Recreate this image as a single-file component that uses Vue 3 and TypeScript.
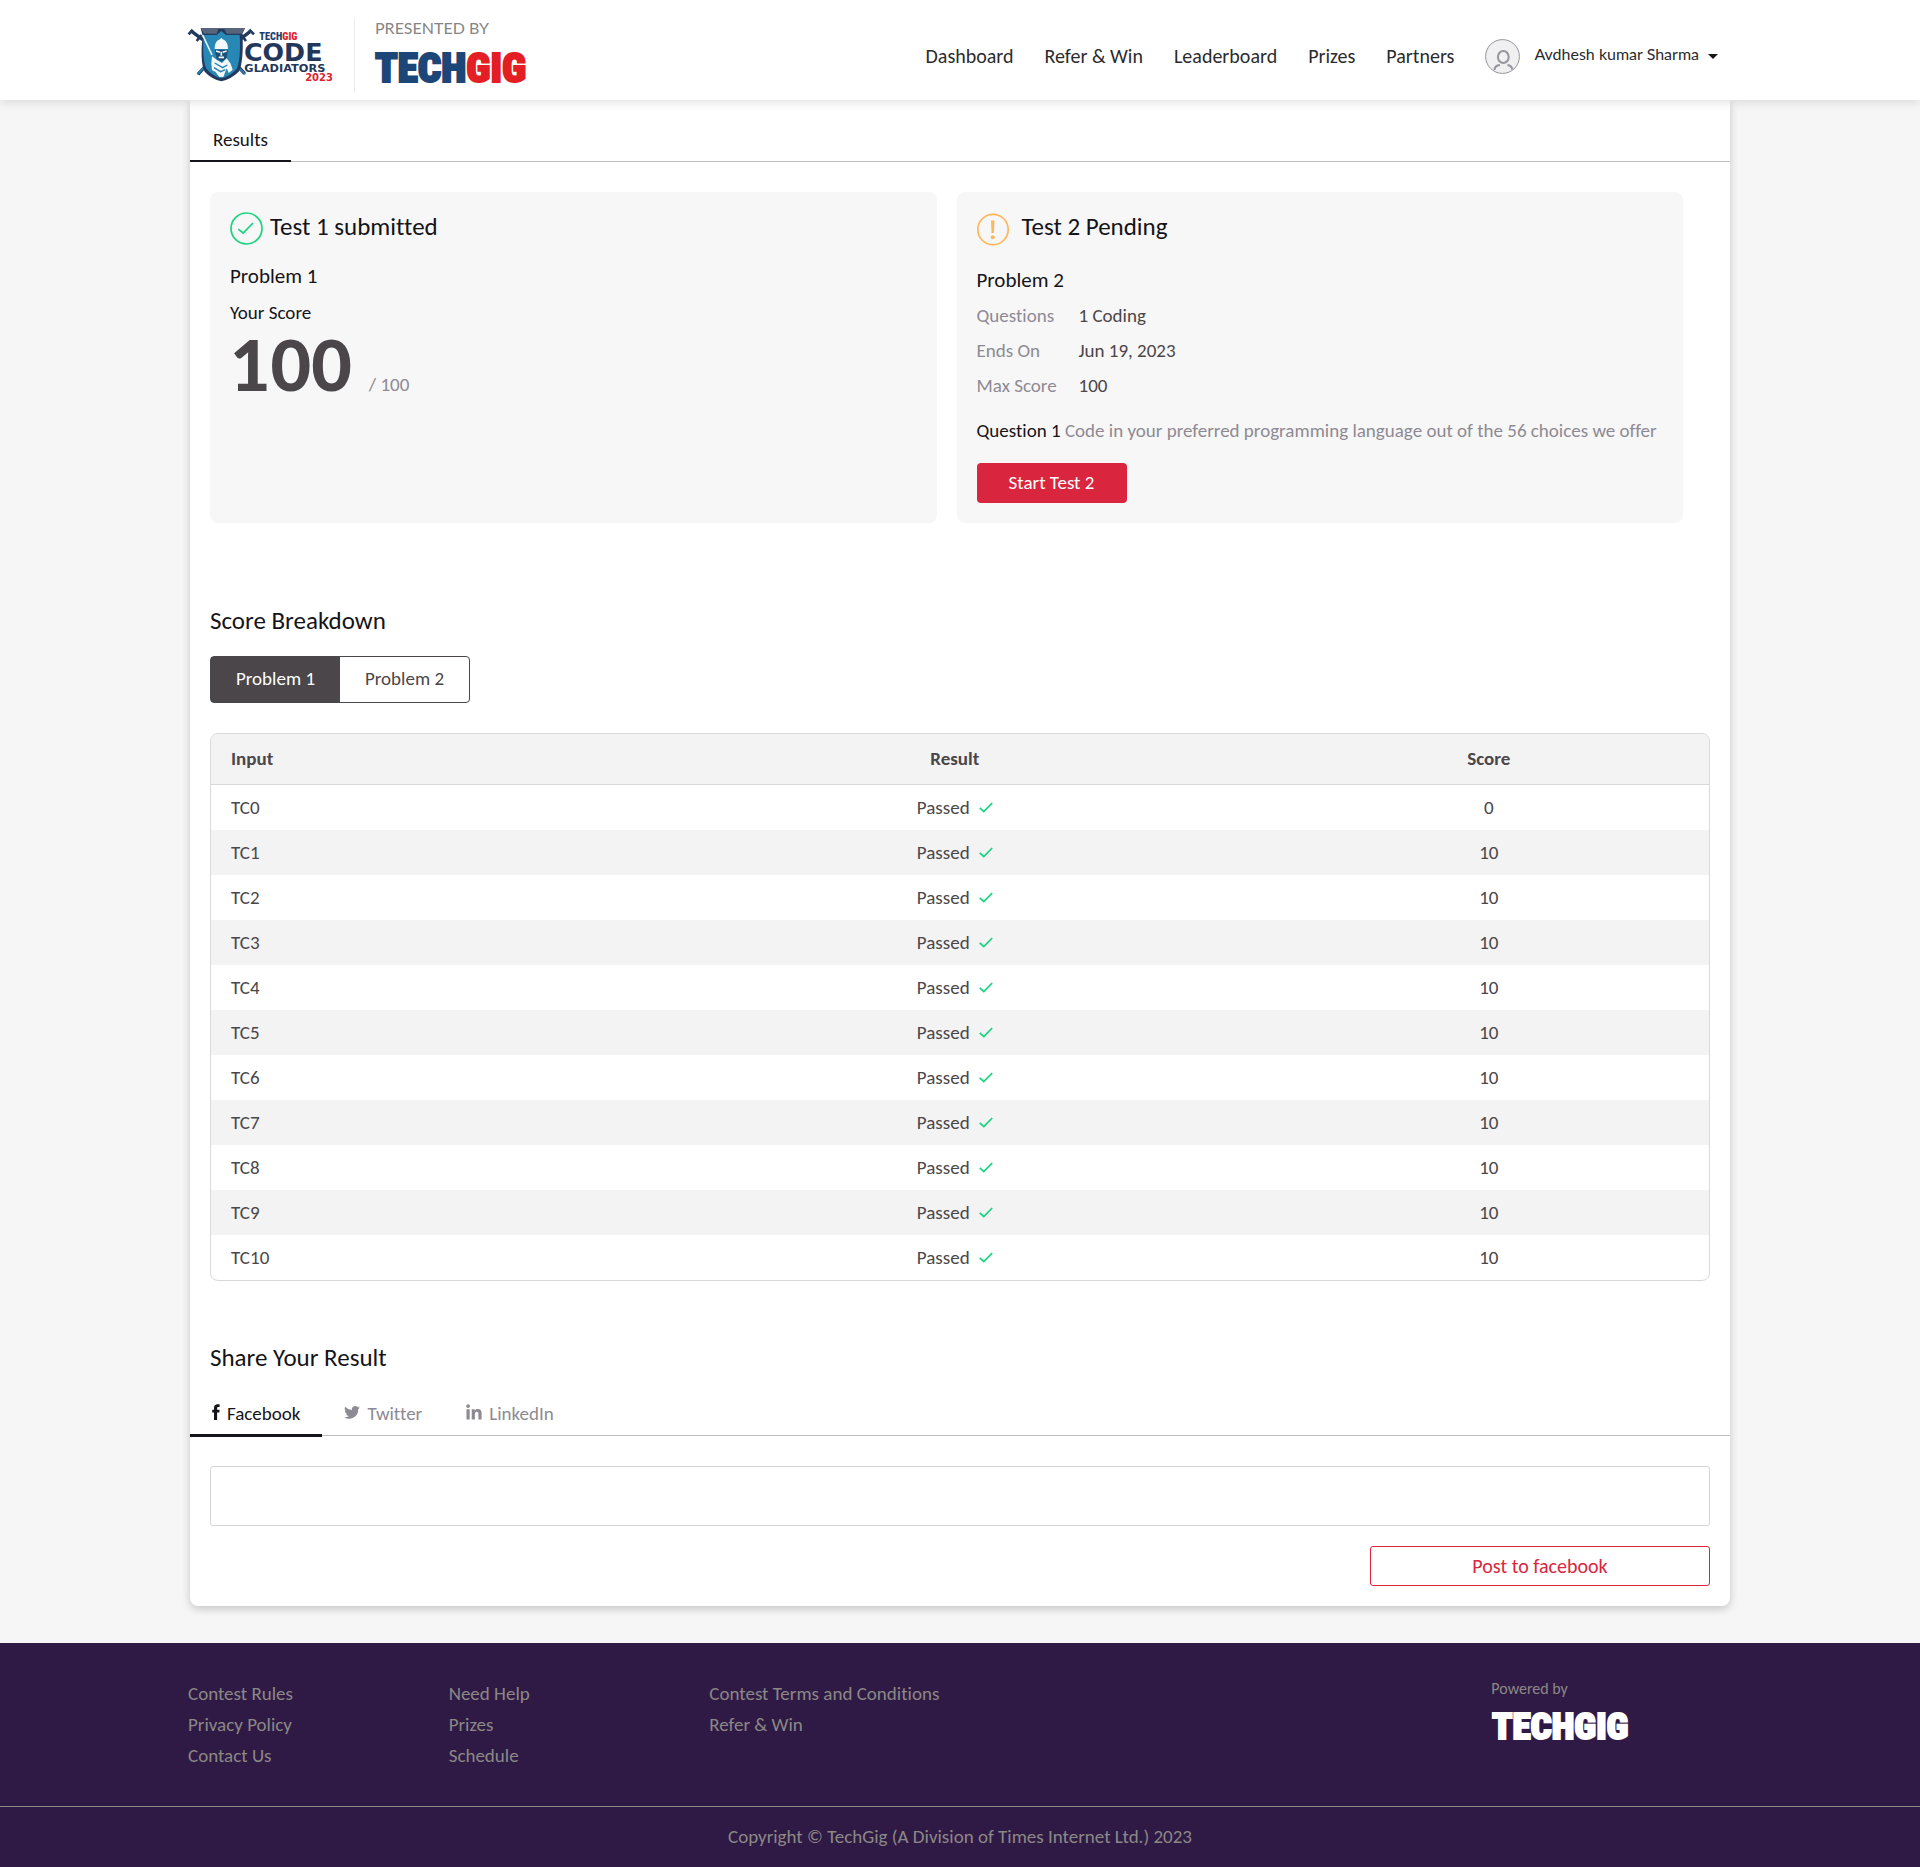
<script setup lang="ts">
import { ref } from 'vue'

interface TestCase {
  input: string
  result: string
  score: number
}

type Network = 'Facebook' | 'Twitter' | 'LinkedIn'

const navLinks: string[] = ['Dashboard', 'Refer & Win', 'Leaderboard', 'Prizes', 'Partners']

const details: { label: string; value: string }[] = [
  { label: 'Questions', value: '1 Coding' },
  { label: 'Ends On', value: 'Jun 19, 2023' },
  { label: 'Max Score', value: '100' },
]

const problems: string[] = ['Problem 1', 'Problem 2']
const activeProblem = ref<string>('Problem 1')

const testCases: TestCase[] = Array.from({ length: 11 }, (_, i) => ({
  input: `TC${i}`,
  result: 'Passed',
  score: i === 0 ? 0 : 10,
}))

const networks: Network[] = ['Facebook', 'Twitter', 'LinkedIn']
const activeNetwork = ref<Network>('Facebook')
const message = ref<string>('')

const footerColumns: string[][] = [
  ['Contest Rules', 'Privacy Policy', 'Contact Us'],
  ['Need Help', 'Prizes', 'Schedule'],
  ['Contest Terms and Conditions', 'Refer & Win'],
]
</script>

<template>
  <header class="header">
    <div class="header-inner">
      <a class="brand" href="#" aria-label="Code Gladiators 2023">
        <svg width="147" height="55" viewBox="54 80 441 165">
          <!-- crossed swords -->
          <g stroke="#223a5e" fill="none">
            <path d="M66 94 L98 118 M240 94 L206 120 M104 200 L84 222 M204 198 L224 220" stroke-width="10" />
            <path d="M56 102 L68 88 M80 122 L94 104 M238 88 L252 102 M214 104 L228 122" stroke-width="8" />
            <path d="M82 222 L106 198 M226 222 L202 198" stroke="#2b7fae" stroke-width="6" />
          </g>
          <!-- shield -->
          <path d="M92 84 H225 L217 100 C221 150 216 200 206 214 Q184 236 154 243 Q124 236 104 214 C94 198 92 150 98 106 Z" fill="#223a5e" />
          <path d="M101 104 L140 104 L154 92 L168 104 L209 104 C212 150 208 192 200 206 Q180 228 154 234 Q128 228 110 206 C100 190 98 150 101 104 Z" fill="#2787b5" />
          <path d="M92 84 H146 L140 100 H102 Z M162 84 H225 L215 100 H170 Z" fill="#56657c" />
          <!-- sword and gladiator -->
          <path d="M98 104 L126 164" stroke="#e6f2f8" stroke-width="5" />
          <path d="M134 146 C134 126 142 120 150 117 L154 112 L158 117 C168 120 174 130 174 146 Z" fill="#f2f8fb" />
          <path d="M134 148 H174 L170 174 L156 184 L140 176 Z" fill="#1d4f78" />
          <path d="M138 152 L150 156 M158 156 L170 152 M154 154 V166 M146 171 H162" stroke="#f2f8fb" stroke-width="5" />
          <path d="M126 168 L142 180 L156 188 L170 174 L182 190 L188 208 L176 218 L170 204 L160 230 L148 230 L136 214 L126 210 L124 190 Z" fill="#f2f8fb" />
          <path d="M134 188 L158 202 L172 194 M132 202 L152 214 L166 208" stroke="#2b7fae" stroke-width="4" fill="none" />
          <!-- wordmark -->
          <text x="268" y="119" class="mark-narrow" fill="#223f73">TECH<tspan fill="#e01f26">GIG</tspan></text>
          <text x="222" y="181" class="mark-wide" font-size="76" fill="#24365a">CODE</text>
          <text x="223" y="214" class="mark-wide" font-size="34" fill="#24365a">GLADIATORS</text>
          <text x="489" y="243" class="mark-wide" font-size="30" text-anchor="end" fill="#e01f2f">2023</text>
        </svg>
      </a>
      <div class="presented">
        <span class="presented-label">PRESENTED BY</span>
        <svg width="154" height="38" viewBox="0 0 154 38" aria-label="TechGig">
          <text x="0" y="34" class="techgig" font-size="41" fill="#1d4678" stroke="#1d4678">TECH<tspan fill="#e31e25" stroke="#e31e25">GIG</tspan></text>
        </svg>
      </div>
      <nav class="nav">
        <a v-for="link in navLinks" :key="link" href="#" class="nav-link">{{ link }}</a>
        <button type="button" class="user">
          <svg width="35" height="35" viewBox="0 0 35 35" fill="none" stroke="#97949d">
            <circle cx="17.5" cy="17.5" r="16.9" fill="#f0f0f0" />
            <ellipse cx="18.3" cy="18" rx="5.4" ry="6" stroke-width="2" />
            <path d="M9.5 31 C9.5 28.5 11.5 26.3 15 26 M22.5 26 C25.5 26.4 27 28.4 27.3 30.5" stroke-width="2" />
          </svg>
          <span class="user-name">Avdhesh kumar Sharma</span>
          <svg width="10" height="5" viewBox="0 0 10 5"><path d="M0 0 H10 L5 5 Z" fill="#151419" /></svg>
        </button>
      </nav>
    </div>
  </header>

  <main class="panel">
    <nav class="result-tabs">
      <a href="#" class="result-tab">Results</a>
    </nav>

    <section class="tests">
      <article class="card">
        <div class="card-head">
          <svg width="33" height="33" viewBox="0 0 33 33" fill="none" stroke="#16d47f">
            <circle cx="16.5" cy="16.5" r="15.5" stroke-width="1.7" />
            <path d="M8.3 17.2 L13.2 21 L23 11" stroke-width="1.7" />
          </svg>
          <h2>Test 1 submitted</h2>
        </div>
        <h3>Problem 1</h3>
        <p class="score-label">Your Score</p>
        <p class="score"><strong>100</strong><span>/ 100</span></p>
      </article>

      <article class="card pending">
        <div class="card-head">
          <svg width="32" height="34" viewBox="0 0 32 34">
            <circle cx="16" cy="17.5" r="15.2" fill="none" stroke="#ffb659" stroke-width="1.7" />
            <path d="M14 8.5 H17.4 L16.9 21 H14.5 Z" fill="#ffb659" />
            <circle cx="15.7" cy="25.3" r="2" fill="#ffb659" />
          </svg>
          <h2>Test 2 Pending</h2>
        </div>
        <h3>Problem 2</h3>
        <dl class="details">
          <template v-for="d in details" :key="d.label">
            <dt>{{ d.label }}</dt>
            <dd>{{ d.value }}</dd>
          </template>
        </dl>
        <p class="question"><span>Question 1</span> Code in your preferred programming language out of the 56 choices we offer</p>
        <button type="button" class="start">Start Test 2</button>
      </article>
    </section>

    <section class="breakdown">
      <h2>Score Breakdown</h2>
      <div class="toggle">
        <button
          v-for="p in problems"
          :key="p"
          type="button"
          :class="{ active: p === activeProblem }"
          @click="activeProblem = p"
        >{{ p }}</button>
      </div>
      <div class="table-frame">
        <table>
          <colgroup>
            <col class="col-input" />
            <col class="col-result" />
            <col class="col-score" />
          </colgroup>
          <thead>
            <tr><th>Input</th><th>Result</th><th>Score</th></tr>
          </thead>
          <tbody>
            <tr v-for="t in testCases" :key="t.input">
              <td>{{ t.input }}</td>
              <td>
                <span class="result">
                  {{ t.result }}
                  <svg width="14" height="11" viewBox="0 0 14 11"><path d="M.7 5.8 L4.8 9.6 L13.2 1" fill="none" stroke="#16d47f" stroke-width="1.7" /></svg>
                </span>
              </td>
              <td>{{ t.score }}</td>
            </tr>
          </tbody>
        </table>
      </div>
    </section>

    <section class="share">
      <h2>Share Your Result</h2>
      <div class="share-tabs">
        <button
          v-for="n in networks"
          :key="n"
          type="button"
          :class="{ active: n === activeNetwork }"
          @click="activeNetwork = n"
        >
          <svg v-if="n === 'Facebook'" width="8" height="16" viewBox="0 0 8 16" fill="currentColor">
            <path d="M2 16 V8.6 H.2 V5.8 H2 V4 C2 1.4 3.4.2 5.6.2 H7.6 V3 H6.3 C5.4 3 5.1 3.4 5.1 4.1 V5.8 H7.6 L7.3 8.6 H5.1 V16 Z" />
          </svg>
          <svg v-else-if="n === 'Twitter'" width="16" height="13" viewBox="0 0 24 20" fill="currentColor">
            <path d="M24 2.4 a9.8 9.8 0 0 1-2.8.8 4.9 4.9 0 0 0 2.1-2.7 9.8 9.8 0 0 1-3.1 1.2 4.9 4.9 0 0 0-8.4 4.5 A14 14 0 0 1 1.7 1 a4.9 4.9 0 0 0 1.5 6.6 4.9 4.9 0 0 1-2.2-.6 v.1 a4.9 4.9 0 0 0 3.9 4.8 4.9 4.9 0 0 1-2.2.1 4.9 4.9 0 0 0 4.6 3.4 A9.9 9.9 0 0 1 0 17.4 14 14 0 0 0 21.5 4.9 10 10 0 0 0 24 2.4 Z" />
          </svg>
          <svg v-else width="16" height="16" viewBox="0 0 16 16" fill="currentColor">
            <circle cx="2.1" cy="2.1" r="1.9" />
            <path d="M.5 5.2 H3.7 V15.5 H.5 Z M5.7 5.2 H8.7 V6.6 C9.3 5.6 10.4 5 11.8 5 C14.6 5 15.6 6.7 15.6 9.3 V15.5 H12.4 V9.9 C12.4 8.5 12 7.7 10.8 7.7 C9.4 7.7 8.9 8.7 8.9 10 V15.5 H5.7 Z" />
          </svg>
          <span>{{ n }}</span>
        </button>
      </div>
      <textarea v-model="message" aria-label="Message"></textarea>
      <button type="button" class="post">Post to facebook</button>
    </section>
  </main>

  <footer class="footer">
    <div class="footer-grid">
      <ul v-for="(col, i) in footerColumns" :key="i">
        <li v-for="item in col" :key="item"><a href="#">{{ item }}</a></li>
      </ul>
      <div class="powered">
        <span>Powered by</span>
        <svg width="140" height="36" viewBox="0 0 140 36" aria-label="TechGig">
          <text x="1" y="32" class="techgig" font-size="37" fill="#fff" stroke="#fff">TECHGIG</text>
        </svg>
      </div>
    </div>
    <p class="copyright">Copyright © TechGig (A Division of Times Internet Ltd.) 2023</p>
  </footer>
</template>

<style>
body {
  background: #f6f6f6;
}
#app {
  font: 19px/28px Carlito, Lato, sans-serif;
  font-variant-ligatures: none;
  color: #4a4649;
}
</style>

<style scoped>
* {
  box-sizing: border-box;
}
h2,
h3,
p,
ul,
dl,
dd {
  margin: 0;
  padding: 0;
}
ul {
  list-style: none;
}
a {
  color: inherit;
  text-decoration: none;
}
button {
  padding: 0;
  border: 0;
  background: none;
  font: inherit;
  color: inherit;
  cursor: pointer;
}
svg {
  display: block;
  flex: none;
  overflow: visible;
}
h2 {
  font-size: 25px;
  line-height: 28px;
  font-weight: 400;
  color: #151419;
}
h3 {
  font-size: 21px;
  line-height: 28px;
  font-weight: 400;
  color: #151419;
}

.header {
  position: relative;
  background: #fff;
  box-shadow: 0 2px 10px rgba(0, 0, 0, 0.12);
}
.header-inner {
  display: flex;
  max-width: 1544px;
  height: 100px;
  margin: 0 auto;
}
.brand {
  padding-top: 27px;
}
.presented {
  height: 75px;
  margin: 18px 0 0 19px;
  padding-left: 20px;
  border-left: 1px solid #ececec;
}
.presented-label {
  display: block;
  margin-bottom: 10px;
  font: 16px/20px Lato, sans-serif;
  color: #858585;
}
.techgig {
  font-family: "Roboto Condensed", Roboto, sans-serif;
  font-weight: 900;
  stroke-width: 2px;
}
.mark-narrow {
  font: 900 31px "Roboto Condensed", Roboto, sans-serif;
}
.mark-wide {
  font-family: "DejaVu Sans", sans-serif;
  font-weight: 700;
}
.nav {
  display: flex;
  align-items: center;
  gap: 31px;
  margin-left: auto;
  padding: 12px 14px 0 0;
  font-size: 20px;
  color: #2b2b2d;
}
.nav-link {
  padding-bottom: 1px;
}
.user {
  display: flex;
  align-items: center;
}
.user-name {
  margin: 0 9px 0 14px;
  padding-bottom: 4px;
  font: 16px/20px Lato, sans-serif;
}

.panel {
  max-width: 1540px;
  margin: 0 auto 37px;
  padding-bottom: 20px;
  background: #fff;
  border-radius: 0 0 8px 8px;
  box-shadow: 0 3px 8px rgba(0, 0, 0, 0.2);
}
.result-tabs {
  display: flex;
  height: 62px;
  padding-top: 17px;
  border-bottom: 1px solid #bdbdbd;
}
.result-tab {
  height: 45px;
  padding: 0 23px;
  line-height: 46px;
  color: #151419;
  border-bottom: 2px solid #151419;
}

.tests {
  display: grid;
  grid-template-columns: 1fr 1fr;
  gap: 20px;
  margin: 30px 47px 84px 20px;
}
.card {
  padding: 20px;
  background: #f7f7f7;
  border-radius: 8px;
}
.card-head {
  display: flex;
  gap: 7px;
  margin-bottom: 17px;
}
.card-head h2 {
  line-height: 30px;
}
.pending .card-head {
  gap: 13px;
  margin-bottom: 20px;
}
.score-label {
  margin-top: 9px;
  color: #151419;
}
.score {
  display: flex;
  align-items: baseline;
  gap: 17px;
  margin-top: 1px;
  color: #8e8a93;
}
.score strong {
  font: 900 70px/72px Lato, sans-serif;
  color: #4a4649;
}
.details {
  display: grid;
  grid-template-columns: 102px 1fr;
  margin-top: 4px;
  line-height: 35px;
}
.details dt {
  color: #8e8a93;
}
.question {
  margin: 14px 0 18px;
  color: #8e8a93;
}
.question span {
  color: #151419;
}
.start {
  display: block;
  width: 150px;
  height: 40px;
  border-radius: 4px;
  background: #d9263e;
  color: #fff;
}

.breakdown {
  padding: 0 20px;
}
.toggle {
  display: inline-flex;
  height: 47px;
  margin: 21px 0 30px;
  border: 1px solid #4a4649;
  border-radius: 4px;
  vertical-align: top;
}
.toggle button {
  width: 129px;
  padding-bottom: 2px;
}
.toggle .active {
  background: #4a4649;
  color: #fff;
}
.table-frame {
  border: 1px solid #d9d9d9;
  border-radius: 8px;
  overflow: hidden;
}
table {
  width: 100%;
  table-layout: fixed;
  border-collapse: separate;
  border-spacing: 0;
}
.col-input {
  width: 28.7%;
}
.col-result {
  width: 41.9%;
}
th,
td {
  height: 45px;
  padding: 0;
  text-align: center;
}
th {
  height: 51px;
  background: #f3f3f3;
  border-bottom: 1px solid #d9d9d9;
  font-weight: 700;
}
th:first-child,
td:first-child {
  padding-left: 20px;
  text-align: left;
}
tbody tr:nth-child(even) {
  background: #f3f3f3;
}
.result {
  display: inline-flex;
  align-items: center;
  gap: 9px;
  vertical-align: top;
}

.share {
  margin-top: 63px;
}
.share h2 {
  padding-left: 20px;
}
.share-tabs {
  display: flex;
  height: 45px;
  margin: 19px 0 30px;
  border-bottom: 1px solid #bdbdbd;
}
.share-tabs button {
  position: relative;
  display: flex;
  align-items: center;
  gap: 7px;
  height: 44px;
  padding: 2px 22px 0;
  color: #8e8a93;
}
.share-tabs svg {
  margin-bottom: 4px;
}
.share-tabs .active {
  color: #151419;
}
.share-tabs .active::after {
  content: "";
  position: absolute;
  left: 0;
  right: 0;
  bottom: -2px;
  height: 3px;
  background: #151419;
}
textarea {
  display: block;
  width: calc(100% - 40px);
  height: 60px;
  margin: 0 20px 20px;
  padding: 10px;
  border: 1px solid #d5d5d5;
  border-radius: 3px;
  background: #fff;
  font: inherit;
  resize: none;
}
.post {
  display: block;
  width: 340px;
  height: 40px;
  margin: 0 20px 0 auto;
  border: 1px solid #d9263e;
  border-radius: 3px;
  font-size: 20px;
  color: #d9263e;
}

.footer {
  background: #2f1a45;
  color: #8c8886;
}
.footer-grid {
  display: grid;
  grid-template-columns: repeat(6, 1fr);
  gap: 20px;
  max-width: 1544px;
  margin: 0 auto;
  padding: 35px 0;
  line-height: 31px;
}
.footer-grid li {
  white-space: nowrap;
}
.powered {
  grid-column: 6;
}
.powered span {
  display: block;
  margin-bottom: 7px;
  font-size: 16px;
  line-height: 22px;
}
.copyright {
  border-top: 1px solid #8c8886;
  line-height: 60px;
  text-align: center;
}
</style>
